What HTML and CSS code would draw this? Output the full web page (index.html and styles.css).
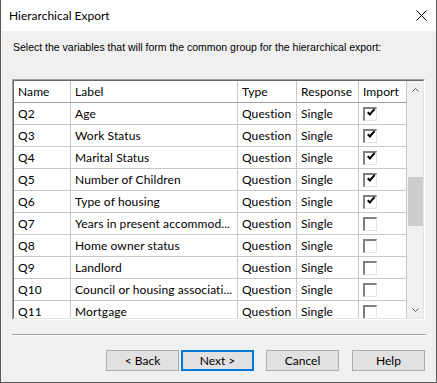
FILE: index.html
```html
<!DOCTYPE html>
<html lang="en">
<head>
  <meta charset="UTF-8" />
  <title>Hierarchical Export</title>
  <link rel="stylesheet" href="styles.css">
</head>
<body>
  <div class="dialog">

    <!-- Title bar -->
    <div class="titlebar">
      <span class="title">Hierarchical Export</span>
      <svg class="close" width="11" height="11" viewBox="0 0 11 11" aria-label="Close">
        <path d="M0.5 0.5 L10.5 10.5 M10.5 0.5 L0.5 10.5" stroke="#000" stroke-width="1" fill="none" />
      </svg>
    </div>

    <div class="content">
      <p class="prompt">Select the variables that will form the common group for the hierarchical export:</p>

      <!-- Variable grid -->
      <div class="grid-frame">
        <div class="grid-inner">
          <div class="grid-view">
            <table class="grid">
              <colgroup>
                <col class="c-name"><col class="c-label"><col class="c-type"><col class="c-resp"><col class="c-imp">
              </colgroup>
              <thead>
                <tr><th>Name</th><th>Label</th><th>Type</th><th>Response</th><th>Import</th></tr>
              </thead>
              <tbody>
                <tr><td>Q2</td><td>Age</td><td>Question</td><td>Single</td><td><span class="chk on"></span></td></tr>
                <tr><td>Q3</td><td>Work Status</td><td>Question</td><td>Single</td><td><span class="chk on"></span></td></tr>
                <tr><td>Q4</td><td>Marital Status</td><td>Question</td><td>Single</td><td><span class="chk on"></span></td></tr>
                <tr><td>Q5</td><td>Number of Children</td><td>Question</td><td>Single</td><td><span class="chk on"></span></td></tr>
                <tr><td>Q6</td><td>Type of housing</td><td>Question</td><td>Single</td><td><span class="chk on"></span></td></tr>
                <tr><td>Q7</td><td title="Years in present accommodation">Years in present accommod...</td><td>Question</td><td>Single</td><td><span class="chk"></span></td></tr>
                <tr><td>Q8</td><td>Home owner status</td><td>Question</td><td>Single</td><td><span class="chk"></span></td></tr>
                <tr><td>Q9</td><td>Landlord</td><td>Question</td><td>Single</td><td><span class="chk"></span></td></tr>
                <tr><td>Q10</td><td title="Council or housing association">Council or housing associati...</td><td>Question</td><td>Single</td><td><span class="chk"></span></td></tr>
                <tr><td>Q11</td><td>Mortgage</td><td>Question</td><td>Single</td><td><span class="chk"></span></td></tr>
              </tbody>
            </table>
          </div>
          <div class="scrollbar">
            <svg class="arrow" width="7" height="4" viewBox="0 0 7 4"><path d="M0.5 3.5 L3.5 0.5 L6.5 3.5" stroke="#606060" fill="none" /></svg>
            <div class="track"><div class="thumb"></div></div>
            <svg class="arrow" width="7" height="4" viewBox="0 0 7 4"><path d="M0.5 0.5 L3.5 3.5 L6.5 0.5" stroke="#606060" fill="none" /></svg>
          </div>
        </div>
      </div>

      <div class="separator"></div>

      <div class="buttons">
        <button class="btn">&lt; Back</button>
        <button class="btn default">Next &gt;</button>
        <button class="btn gap">Cancel</button>
        <button class="btn gap">Help</button>
      </div>
    </div>
  </div>
</body>
</html>
```

FILE: styles.css
```css
/* Base */
*, *::before, *::after {
  box-sizing: border-box;
}
body {
  margin: 0;
  background: #f0f0f0;
  font-family: Lato, "Noto Sans", sans-serif;
  font-size: 12px;
  color: #000;
}

/* Dialog window */
.dialog {
  width: 437px;
  height: 383px;
  background: #f0f0f0;
  border: 1px solid #5a5a5a;
  border-top: none;
  display: flex;
  flex-direction: column;
}

/* Title bar */
.titlebar {
  height: 31px;
  background: #fff;
  display: flex;
  align-items: center;
  justify-content: space-between;
  padding: 0 10px 0 8px;
}
.title {
  font-size: 12px;
  margin-top: -1px;
}
.close {
  display: block;
  margin-right: -1px;
}

/* Body */
.content {
  padding: 0 11px 0 11px;
  flex: 1;
}
.prompt {
  margin: 9px 0 0 1px;
  font-family: "Liberation Sans", sans-serif;
  font-size: 10.5px;
  height: 14px;
  line-height: 14px;
}

/* Grid frame (sunken) */
.grid-frame {
  margin-top: 25px;
  width: 413px;
  border: 1px solid;
  border-color: #a0a0a0 #ffffff #ffffff #a0a0a0;
}
.grid-inner {
  height: 239px;
  border: 1px solid;
  border-color: #696969 #e3e3e3 #e3e3e3 #696969;
  background: #fff;
  display: flex;
}
.grid-view {
  width: 393px;
  overflow: hidden;
}
.grid {
  border-collapse: separate;
  border-spacing: 0;
  table-layout: fixed;
  width: 393px;
}
.c-name { width: 57px; }
.c-label { width: 167px; }
.c-type { width: 59px; }
.c-resp { width: 62px; }
.c-imp { width: 48px; }

.grid th,
.grid td {
  height: 22px;
  padding: 0 0 0 4px;
  border-right: 1px solid #c8c8c8;
  border-bottom: 1px solid #c8c8c8;
  font-weight: normal;
  font-size: 12px;
  letter-spacing: 0.1px;
  text-align: left;
  white-space: nowrap;
  overflow: hidden;
  line-height: 21px;
}
.grid th {
  border-bottom-color: #a0a0a0;
}

/* Checkbox (classic sunken) */
.chk {
  display: inline-block;
  vertical-align: middle;
  width: 14px;
  height: 14px;
  margin-top: -2px;
  background: #fff;
  border-style: solid;
  border-width: 2px 1px 1px 2px;
  border-color: #808080 #e3e3e3 #e3e3e3 #808080;
  position: relative;
}
.chk.on::after {
  content: "";
  position: absolute;
  left: 2px;
  top: 0px;
  width: 8px;
  height: 4px;
  border-left: 2px solid #000;
  border-bottom: 2px solid #000;
  transform: translate(0, 4px) rotate(-48deg);
  transform-origin: left top;
}

/* Scrollbar */
.scrollbar {
  width: 16px;
  background: #f0f0f0;
  display: flex;
  flex-direction: column;
  align-items: center;
}
.arrow {
  display: block;
  margin: 7px 0 6px;
}
.track {
  flex: 1;
  width: 100%;
  position: relative;
}
.thumb {
  position: absolute;
  left: 1px;
  right: 0;
  top: 79px;
  height: 49px;
  background: #cdcdcd;
}

/* Separator */
.separator {
  margin-top: 14px;
  width: 414px;
  border-top: 1px solid #a0a0a0;
  border-bottom: 1px solid #fff;
}

/* Buttons */
.buttons {
  display: flex;
  gap: 2px;
  padding-left: 94px;
  margin-top: 14px;
}
.btn {
  width: 73px;
  height: 21px;
  padding: 0;
  background: #e1e1e1;
  border: 1px solid #adadad;
  font-family: Lato, "Noto Sans", sans-serif;
  font-size: 12px;
  color: #000;
  line-height: 17px;
}
.btn.default {
  border: 2px solid #0078d7;
}
.btn.gap {
  margin-left: 10px;
}
.btn.gap + .btn.gap {
  margin-left: 11px;
}
```
